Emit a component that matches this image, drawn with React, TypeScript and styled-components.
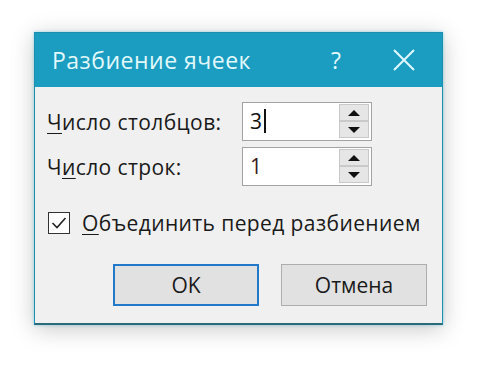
import React from 'react';
import styled, { createGlobalStyle } from 'styled-components';

const GlobalStyle = createGlobalStyle`
  html, body {
    margin: 0;
    padding: 0;
    background: #ffffff;
  }
  body {
    font-family: 'Open Sans', 'Noto Sans', sans-serif;
    color: #1a1a1a;
  }
`;

const Page = styled.div`
  width: 486px;
  height: 370px;
  padding: 32px 0 0 34px;
  box-sizing: border-box;
`;

const Dialog = styled.div`
  width: 409px;
  height: 293px;
  box-sizing: border-box;
  display: flex;
  flex-direction: column;
  background: #f0f0f0;
  border: 1px solid #1c8fb0;
  border-bottom: 2px solid #2a6a7a;
  box-shadow: 0 4px 22px rgba(0, 0, 0, 0.22), 0 0 3px rgba(60, 200, 230, 0.5);
`;

const TitleBar = styled.div`
  height: 54px;
  flex: 0 0 54px;
  display: flex;
  align-items: center;
  background: #1a9dc1;
  color: #e2f8fc;
  padding-left: 17px;
`;

const Title = styled.div`
  flex: 1;
  font-size: 23px;
  letter-spacing: 0.5px;
`;

const HelpMark = styled.div`
  width: 30px;
  margin-right: 42px;
  text-align: center;
  font-size: 23px;
`;

const CloseIcon = styled.svg`
  width: 22px;
  height: 22px;
  margin-right: 27px;
`;

const Body = styled.div`
  flex: 1;
  display: flex;
  flex-direction: column;
  padding: 15px 15px 0 12px;
`;

const Fields = styled.div`
  display: grid;
  grid-template-columns: 195px 130px;
  row-gap: 6px;
  align-items: center;
`;

const Label = styled.div`
  font-size: 21px;
  letter-spacing: 0.4px;
`;

const Key = styled.span`
  text-decoration: underline;
  text-underline-offset: 3px;
  text-decoration-thickness: 1px;
`;

const SpinBox = styled.div`
  height: 39px;
  box-sizing: border-box;
  display: flex;
  background: #ffffff;
  border: 1px solid #a3a3a3;
  padding: 1px 2px 2px 0;
`;

const SpinValue = styled.div<{ $caret?: boolean }>`
  flex: 1;
  display: flex;
  align-items: center;
  padding-left: 7px;
  font-size: 21px;
  color: ${({ $caret }) => ($caret ? '#111' : '#3a1a24')};

  &::after {
    content: '';
    display: ${({ $caret }) => ($caret ? 'block' : 'none')};
    width: 2px;
    height: 24px;
    margin-left: 2px;
    background: #111;
  }
`;

const SpinButtons = styled.div`
  width: 30px;
  display: flex;
  flex-direction: column;
`;

const SpinButton = styled.div`
  flex: 1;
  display: flex;
  align-items: center;
  justify-content: center;
  background: #e6e6e6;
  border: 1px solid #c9c9c9;
`;

const Arrow = styled.div<{ $down?: boolean }>`
  width: 0;
  height: 0;
  border-left: 6px solid transparent;
  border-right: 6px solid transparent;
  ${({ $down }) =>
    $down ? 'border-top: 6px solid #111;' : 'border-bottom: 6px solid #111;'}
`;

const CheckRow = styled.div`
  display: flex;
  align-items: center;
  gap: 12px;
  margin-top: 23px;
  margin-left: 1px;
`;

const CheckBox = styled.div`
  width: 22px;
  height: 22px;
  box-sizing: border-box;
  border: 1.5px solid #333;
  background: #fff;
  display: flex;
  align-items: center;
  justify-content: center;
`;

const Buttons = styled.div`
  display: flex;
  justify-content: flex-end;
  gap: 22px;
  margin-top: 27px;
`;

const Button = styled.div<{ $primary?: boolean }>`
  width: 146px;
  height: 42px;
  box-sizing: border-box;
  display: flex;
  align-items: center;
  justify-content: center;
  background: #e1e1e1;
  font-size: 21px;
  border: ${({ $primary }) => ($primary ? '2px solid #2379c9' : '1px solid #adadad')};
`;

function Spinner({ value, caret }: { value: string; caret?: boolean }) {
  return (
    <SpinBox>
      <SpinValue $caret={caret}>{value}</SpinValue>
      <SpinButtons>
        <SpinButton>
          <Arrow />
        </SpinButton>
        <SpinButton>
          <Arrow $down />
        </SpinButton>
      </SpinButtons>
    </SpinBox>
  );
}

export default function App() {
  return (
    <>
      <GlobalStyle />
      <Page>
        <Dialog>
          <TitleBar>
            <Title>Разбиение ячеек</Title>
            <HelpMark>?</HelpMark>
            <CloseIcon viewBox="0 0 22 22">
              <path d="M1 1 L21 21 M21 1 L1 21" stroke="#e2f8fc" strokeWidth="2" fill="none" />
            </CloseIcon>
          </TitleBar>
          <Body>
            <Fields>
              <Label>
                <Key>Ч</Key>исло столбцов:
              </Label>
              <Spinner value="3" caret />
              <Label>
                Ч<Key>и</Key>сло строк:
              </Label>
              <Spinner value="1" />
            </Fields>
            <CheckRow>
              <CheckBox>
                <svg width="16" height="14" viewBox="0 0 16 14">
                  <path d="M1.5 7 L6 11.5 L14.5 2" stroke="#222" strokeWidth="1.6" fill="none" />
                </svg>
              </CheckBox>
              <Label>
                <Key>О</Key>бъединить перед разбиением
              </Label>
            </CheckRow>
            <Buttons>
              <Button $primary>OK</Button>
              <Button>Отмена</Button>
            </Buttons>
          </Body>
        </Dialog>
      </Page>
    </>
  );
}
